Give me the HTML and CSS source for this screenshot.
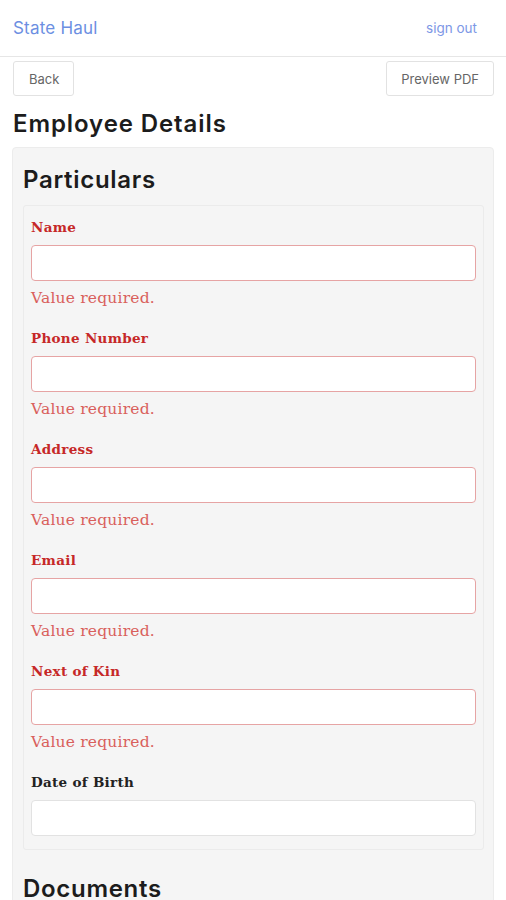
FILE: index.html
```html
<!DOCTYPE html>
<html>
<head>
<meta charset="utf-8">
<link rel="stylesheet" href="styles.css">
</head>
<body>
<nav class="navbar">
  <a class="brand">State Haul</a>
  <a class="signout">sign out</a>
</nav>
<div class="toolbar">
  <button class="btn">Back</button>
  <button class="btn">Preview PDF</button>
</div>
<h1 class="title">Employee Details</h1>
<div class="panel">
  <h2 class="section">Particulars</h2>
  <div class="inner">
    <div class="field error">
      <label>Name</label>
      <input type="text">
      <div class="msg">Value required.</div>
    </div>
    <div class="field error">
      <label>Phone Number</label>
      <input type="text">
      <div class="msg">Value required.</div>
    </div>
    <div class="field error">
      <label>Address</label>
      <input type="text">
      <div class="msg">Value required.</div>
    </div>
    <div class="field error">
      <label>Email</label>
      <input type="text">
      <div class="msg">Value required.</div>
    </div>
    <div class="field error">
      <label>Next of Kin</label>
      <input type="text">
      <div class="msg">Value required.</div>
    </div>
    <div class="field last">
      <label>Date of Birth</label>
      <input type="text">
    </div>
  </div>
  <h2 class="section docs">Documents</h2>
</div>
</body>
</html>
```
FILE: styles.css
```css
html, body { margin: 0; padding: 0; background: #fff; }
body { font-family: "Inter", "Open Sans", sans-serif; color: #222; }

.navbar {
  height: 57px;
  border-bottom: 1px solid #e6e6e6;
  display: flex;
  align-items: center;
  justify-content: space-between;
  padding: 0 29px 0 13px;
  box-sizing: border-box;
}
.brand { font-size: 17px; color: #6c8fe2; letter-spacing: 0.2px; }
.signout { font-size: 13.5px; color: #7d97e6; }

.toolbar {
  display: flex;
  justify-content: space-between;
  padding: 4px 12px 0 13px;
}
.btn {
  height: 35px;
  background: #fff;
  border: 1px solid #e2e2e2;
  border-radius: 3px;
  font-family: "Inter", "Open Sans", sans-serif;
  font-size: 13px;
  color: #666;
  padding: 0 14px;
}
.btn:first-child { padding: 0 14px 0 15px; }

.title {
  margin: 14px 13px 9px;
  font-size: 24px;
  line-height: 28px;
  font-weight: 600;
  color: #1c1c1c;
  letter-spacing: 0.9px;
}

.panel {
  margin: 0 12px;
  background: #f5f5f5;
  border: 1px solid #ececec;
  border-radius: 4px;
  padding: 17px 9px 0 10px;
}
.section {
  margin: 0 0 10px 0;
  font-size: 24px;
  line-height: 30px;
  font-weight: 600;
  color: #1c1c1c;
  letter-spacing: 0.7px;
}
.section.docs { margin-top: 24px; }

.inner {
  border: 1px solid #ebebeb;
  border-radius: 3px;
  padding: 12px 7px 13px;
}

.field { margin-bottom: 21px; }
.field.last { margin-bottom: 0; }
.field label {
  display: block;
  font-family: "DejaVu Serif", serif;
  font-weight: bold;
  font-size: 13.5px;
  line-height: 18px;
  margin-bottom: 9px;
  color: #222;
  letter-spacing: 0.3px;
}
.field input {
  display: block;
  width: 100%;
  box-sizing: border-box;
  height: 36px;
  border: 1px solid #e2e2e2;
  border-radius: 4px;
  background: #fff;
  margin: 0;
}
.field.error label { color: #c62828; }
.field.error input { border-color: #e6a4a4; }
.msg {
  margin-top: 7px;
  font-family: "DejaVu Serif", serif;
  font-size: 15.5px;
  line-height: 20px;
  color: #d9605c;
  letter-spacing: 0.2px;
}
```
